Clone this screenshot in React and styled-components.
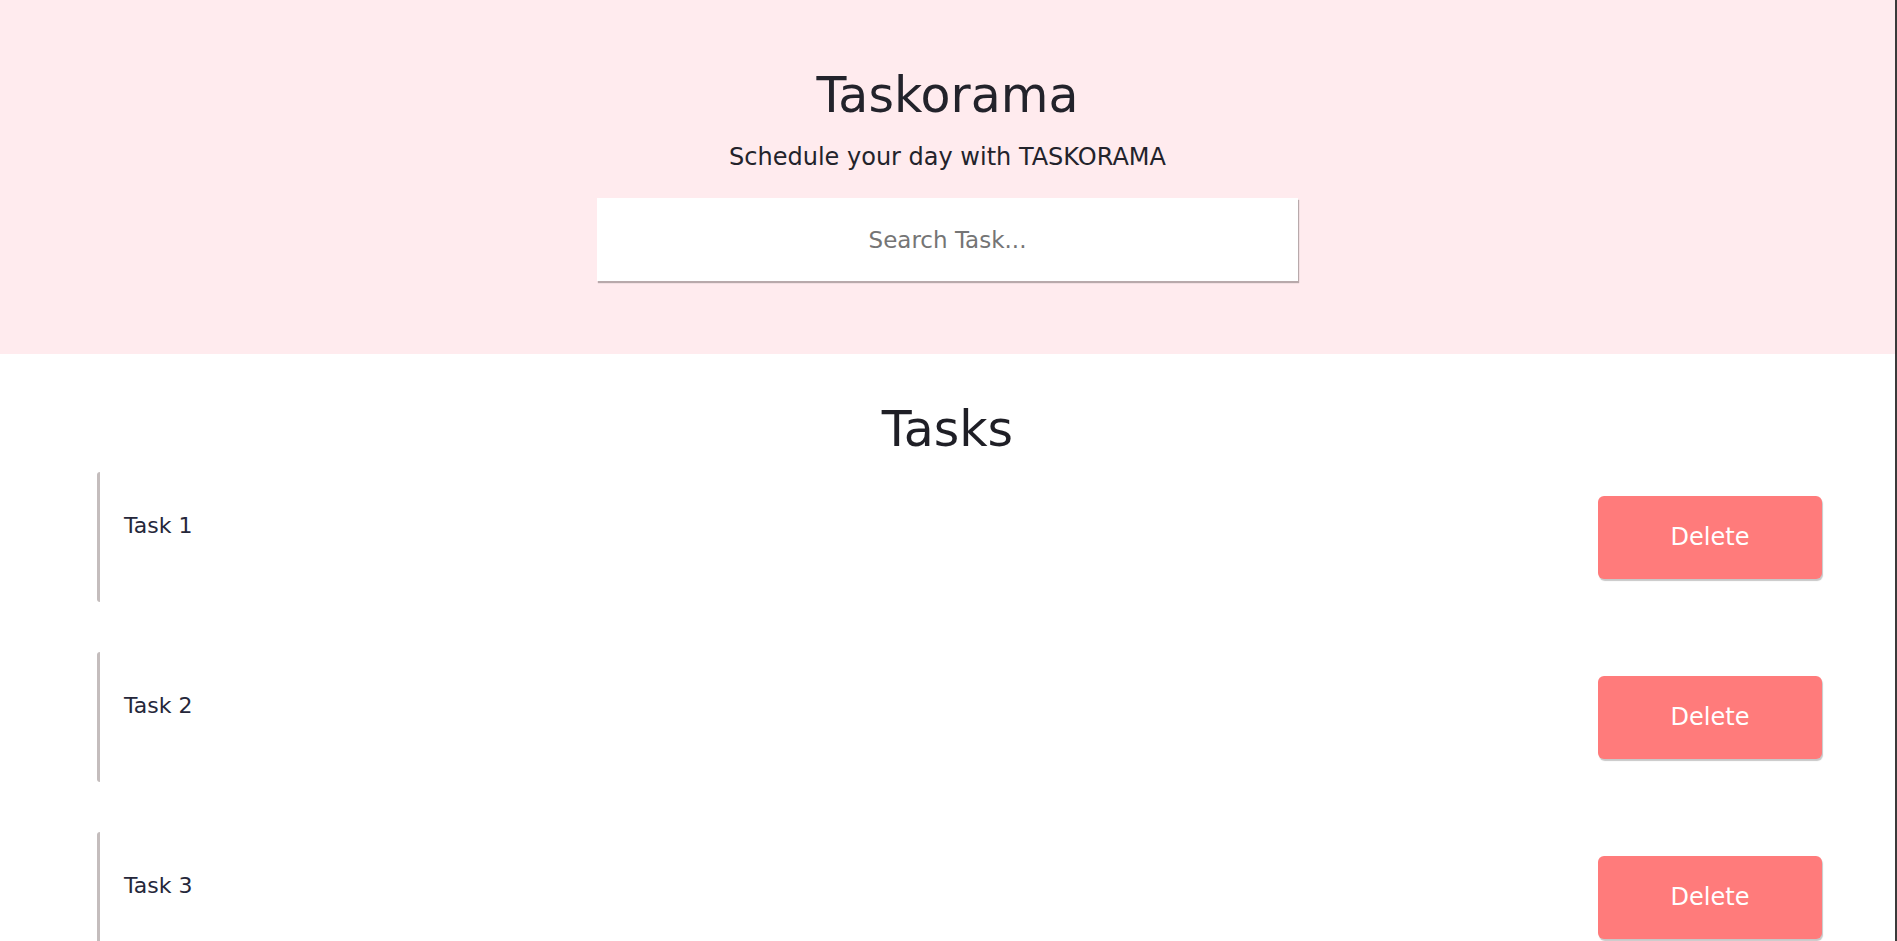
import styled, { createGlobalStyle } from "styled-components"
import { useState } from "react"

const GlobalStyle = createGlobalStyle`
    html, body {
        margin: 0;
        padding: 0;
        overflow: hidden;
        background: #3a3a3a;
    }
    * {
        box-sizing: border-box;
    }
`

export default function App() {
    const [tasks, setTasks] = useState([
        { id: 1, name: "Task 1" },
        { id: 2, name: "Task 2" },
        { id: 3, name: "Task 3" },
    ])
    const [search, setSearch] = useState("")

    const removeTask = (id) => setTasks(tasks.filter((t) => t.id !== id))
    const shown = tasks.filter((t) => t.name.toLowerCase().includes(search.toLowerCase()))

    return (
        <Page>
            <GlobalStyle />
            <Header>
                <Title>Taskorama</Title>
                <Subtitle>Schedule your day with TASKORAMA</Subtitle>
                <SearchInput
                    placeholder="Search Task..."
                    value={search}
                    onChange={(e) => setSearch(e.target.value)}
                />
            </Header>
            <Main>
                <SectionTitle>Tasks</SectionTitle>
                <TaskList>
                    {shown.map((task) => (
                        <TaskRow key={task.id}>
                            <TaskName>{task.name}</TaskName>
                            <DeleteButton onClick={() => removeTask(task.id)}>Delete</DeleteButton>
                        </TaskRow>
                    ))}
                </TaskList>
            </Main>
        </Page>
    )
}

const Page = styled.div`
    margin-right: 2px;
    min-height: 100vh;
    background: #FFFFFF;
    font-family: "DejaVu Sans", "Noto Sans", sans-serif;
    color: #23232b;
`
const Header = styled.header`
    display: flex;
    flex-direction: column;
    align-items: center;
    background: #FFEBEE;
    padding-top: 72px;
    height: 354px;
`
const Title = styled.h1`
    margin: 0;
    font-size: 49px;
    line-height: 48px;
    font-weight: 400;
`
const Subtitle = styled.p`
    margin: 25px 0 0;
    font-size: 24px;
    line-height: 24px;
    font-weight: 400;
`
const SearchInput = styled.input`
    margin-top: 29px;
    width: 701px;
    height: 83px;
    border: none;
    outline: none;
    background: #FFFFFF;
    box-shadow: 1px 2px 1px rgba(0, 0, 0, 0.28);
    text-align: center;
    font-family: inherit;
    font-size: 23px;
    color: #23232b;
    ::placeholder {
        color: #777777;
    }
`
const Main = styled.main`
    display: flex;
    flex-direction: column;
    align-items: center;
    padding-top: 53px;
`
const SectionTitle = styled.h2`
    margin: 0 0 19px;
    font-size: 49px;
    line-height: 46px;
    font-weight: 400;
    color: #1f1f26;
`
const TaskList = styled.ul`
    list-style: none;
    margin: 0;
    padding: 0 73px 0 97px;
    align-self: stretch;
    display: flex;
    flex-direction: column;
    gap: 50px;
`
const TaskRow = styled.li`
    display: flex;
    justify-content: space-between;
    align-items: flex-start;
    height: 130px;
    border-left: 3px solid #C4BDBD;
    border-radius: 3px;
    padding-left: 24px;
`
const TaskName = styled.span`
    margin-top: 43px;
    font-size: 22px;
    line-height: 22px;
    color: #25273a;
`
const DeleteButton = styled.button`
    align-self: center;
    width: 224px;
    height: 83px;
    border: none;
    border-radius: 6px;
    background: #FF7B7B;
    box-shadow: 1px 2px 1px rgba(0, 0, 0, 0.22);
    color: #FFFFFF;
    font-family: inherit;
    font-size: 24px;
    cursor: pointer;
`
